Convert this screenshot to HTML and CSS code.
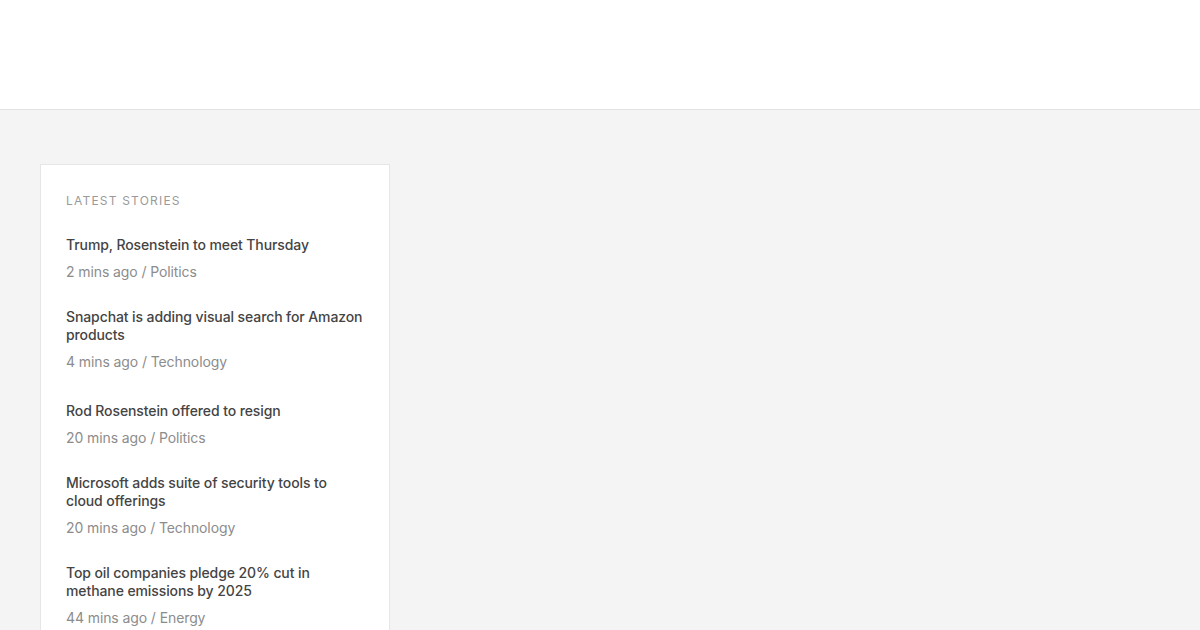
FILE: index.html
```html
<!DOCTYPE html>
<html lang="en">
<head>
<meta charset="UTF-8">
<meta name="viewport" content="width=device-width, initial-scale=1.0">
<title>Latest stories</title>
<link rel="stylesheet" href="styles.css">
</head>
<body>

<div class="header"></div>

<div class="content">
  <div class="stories">
    <h3 class="stories-title">Latest stories</h3>
    <ul class="list">
      <li>
        <a class="headline" href="#">Trump, Rosenstein to meet Thursday</a>
        <p class="meta">2 mins ago / Politics</p>
      </li>
      <li class="gap">
        <a class="headline" href="#">Snapchat is adding visual search for Amazon products</a>
        <p class="meta">4 mins ago / Technology</p>
      </li>
      <li>
        <a class="headline" href="#">Rod Rosenstein offered to resign</a>
        <p class="meta">20 mins ago / Politics</p>
      </li>
      <li>
        <a class="headline" href="#">Microsoft adds suite of security tools to cloud offerings</a>
        <p class="meta">20 mins ago / Technology</p>
      </li>
      <li>
        <a class="headline" href="#">Top oil companies pledge 20% cut in methane emissions by 2025</a>
        <p class="meta">44 mins ago / Energy</p>
      </li>
    </ul>
  </div>
</div>

</body>
</html>
```

FILE: styles.css
```css
*{
  margin: 0;
  padding: 0;
  list-style: none;
  box-sizing: border-box;
}
body{
  font-family: Inter, "Liberation Sans", sans-serif;
  background-color: #f4f4f4;
  color: #444;
}
.header{
  height: 110px;
  background-color: #fff;
  border-bottom: 1px solid #e2e2e2;
}
.content{
  padding: 54px 40px 0;
}
.stories{
  width: 350px;
  background-color: #fff;
  border: 1px solid #e6e6e6;
  padding: 28px 25px 20px;
}
.stories-title{
  font-size: 12px;
  line-height: 16px;
  font-weight: 400;
  letter-spacing: 1.2px;
  text-transform: uppercase;
  color: #9a9a9a;
  margin-bottom: 27px;
}
.list li{
  margin-bottom: 26px;
}
.list li.gap{
  margin-bottom: 30px;
}
.headline{
  display: block;
  font-size: 14px;
  line-height: 18px;
  font-weight: 500;
  letter-spacing: -0.1px;
  color: #444;
  text-decoration: none;
}
.meta{
  margin-top: 8px;
  font-size: 14px;
  line-height: 20px;
  letter-spacing: -0.1px;
  color: #8c8c8c;
}
```
